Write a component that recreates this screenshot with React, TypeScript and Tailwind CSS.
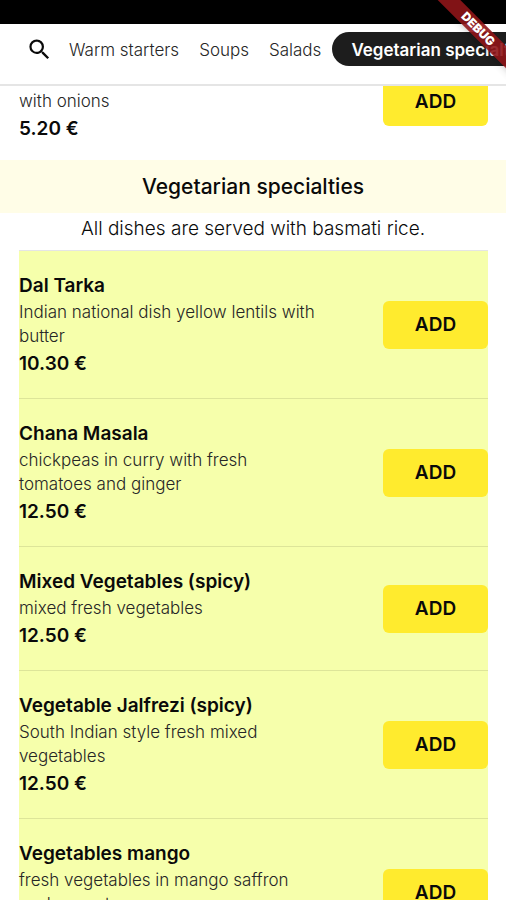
import { MdSearch } from "react-icons/md";

type Dish = { name: string; description: string; price: string };

const starter: Dish = { name: "Onion Bhaji", description: "with onions", price: "5.20 €" };

const dishes: Dish[] = [
  { name: "Dal Tarka", description: "Indian national dish yellow lentils with butter", price: "10.30 €" },
  { name: "Chana Masala", description: "chickpeas in curry with fresh tomatoes and ginger", price: "12.50 €" },
  { name: "Mixed Vegetables (spicy)", description: "mixed fresh vegetables", price: "12.50 €" },
  { name: "Vegetable Jalfrezi (spicy)", description: "South Indian style fresh mixed vegetables", price: "12.50 €" },
  { name: "Vegetables mango", description: "fresh vegetables in mango saffron cashew nut sauce", price: "12.50 €" },
];

const categories = ["Warm starters", "Soups", "Salads"];

function DishRow({ dish }: { dish: Dish }) {
  return (
    <li className="flex items-center justify-between border-b border-black/10 pt-[22px] pb-[21px]">
      <div className="w-[300px]">
        <h3 className="text-[19px] leading-[26px] font-semibold">{dish.name}</h3>
        <p className="mt-px mb-[3px] text-[17px] leading-6 font-light text-neutral-800">{dish.description}</p>
        <p className="text-[19px] leading-[26px] font-semibold">{dish.price}</p>
      </div>
      <button
        type="button"
        aria-label={`Add ${dish.name}`}
        className="h-12 w-[105px] shrink-0 rounded-md bg-[#ffeb2e] text-[19px] font-semibold"
      >
        ADD
      </button>
    </li>
  );
}

export default function App() {
  return (
    <div className="relative flex h-screen flex-col overflow-hidden bg-white font-['Inter',sans-serif] text-neutral-950">
      <div className="h-6 shrink-0 bg-black" />
      <nav className="flex h-[62px] shrink-0 items-start overflow-hidden border-b-2 border-neutral-200 pt-2 pl-[26px] text-[17px] leading-[26px] whitespace-nowrap">
        <button type="button" aria-label="Search" className="flex h-[34px] items-center">
          <MdSearch size={27} />
        </button>
        <div className="ml-4 flex h-[34px] items-center gap-5 pt-0.5 font-light text-neutral-800">
          {categories.map((category) => (
            <a key={category} href="#menu">
              {category}
            </a>
          ))}
        </div>
        <a
          href="#vegetarian"
          aria-current="true"
          className="ml-[11px] flex h-[34px] items-center rounded-full bg-[#1d1d1d] px-[19px] pt-0.5 font-semibold text-white"
        >
          Vegetarian specialties
        </a>
      </nav>

      <main className="min-h-0 flex-1 overflow-hidden">
        <ul className="-mt-[46px] -mb-1 pr-[18px] pl-[19px]">
          <DishRow dish={starter} />
        </ul>
        <section id="vegetarian" className="relative">
          <h2 className="bg-[#fffde7] text-center text-[21px] leading-[53px] font-medium">Vegetarian specialties</h2>
          <p className="pt-1 pb-[9px] text-center text-[19px] leading-6 font-light">
            All dishes are served with basmati rice.
          </p>
          <ul className="mr-[18px] ml-[19px] border-t border-neutral-200 bg-[#f6ffab]">
            {dishes.map((dish) => (
              <DishRow key={dish.name} dish={dish} />
            ))}
          </ul>
        </section>
      </main>

      <div className="absolute top-[21px] -right-8 h-4 w-[120px] rotate-45 bg-[#8f1518]/90 text-center text-xs leading-4 font-black text-white shadow-md">
        DEBUG
      </div>
    </div>
  );
}
